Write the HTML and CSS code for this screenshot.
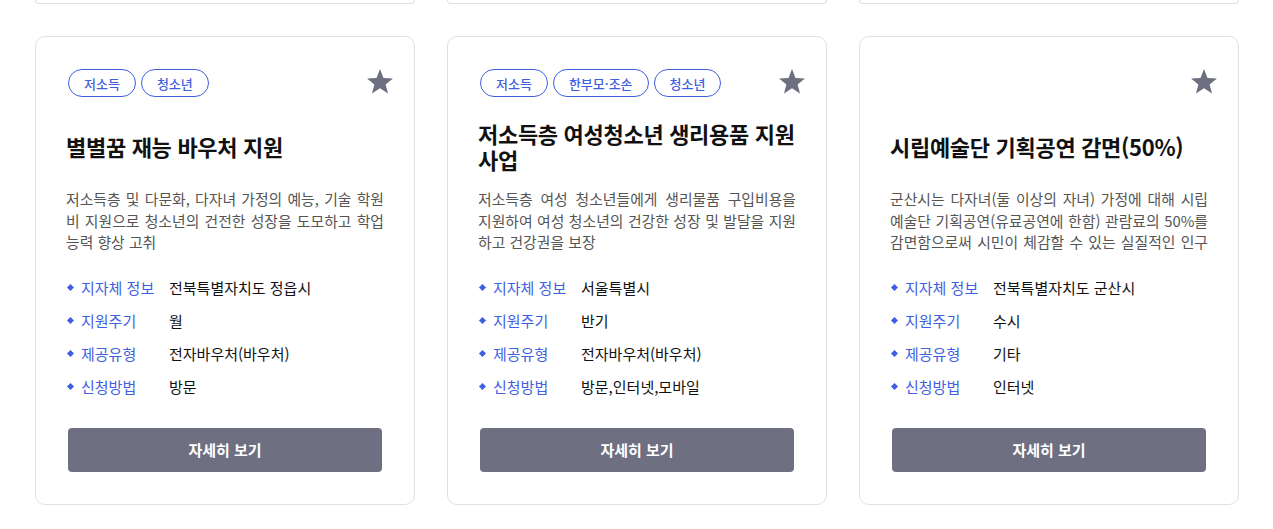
FILE: index.html
```html
<!DOCTYPE html>
<html lang="ko">
<head>
<meta charset="utf-8">
<title>지원 사업 목록</title>
<link rel="stylesheet" href="styles.css">
</head>
<body>
<div class="page">
  <div class="grid">
    <div class="stub"></div>
    <div class="stub"></div>
    <div class="stub"></div>

    <article class="card">
      <div class="card-top">
        <div class="tags">
          <span class="tag">저소득</span>
          <span class="tag">청소년</span>
        </div>
        <svg class="star" viewBox="0 0 24 24" aria-hidden="true"><path d="M12 1.8l3 7.6 8.1.4-6.3 5.1 2.1 7.9L12 18.3l-6.9 4.5 2.1-7.9L.9 9.8l8.1-.4z"/></svg>
      </div>
      <div class="title-box"><h2 class="title">별별꿈 재능 바우처 지원</h2></div>
      <p class="desc">저소득층 및 다문화, 다자녀 가정의 예능, 기술 학원비 지원으로 청소년의 건전한 성장을 도모하고 학업 능력 향상 고취</p>
      <ul class="info">
        <li><span class="label">지자체 정보</span><span class="value">전북특별자치도 정읍시</span></li>
        <li><span class="label">지원주기</span><span class="value">월</span></li>
        <li><span class="label">제공유형</span><span class="value">전자바우처(바우처)</span></li>
        <li><span class="label">신청방법</span><span class="value">방문</span></li>
      </ul>
      <button class="btn" type="button">자세히 보기</button>
    </article>

    <article class="card">
      <div class="card-top">
        <div class="tags">
          <span class="tag">저소득</span>
          <span class="tag">한부모·조손</span>
          <span class="tag">청소년</span>
        </div>
        <svg class="star" viewBox="0 0 24 24" aria-hidden="true"><path d="M12 1.8l3 7.6 8.1.4-6.3 5.1 2.1 7.9L12 18.3l-6.9 4.5 2.1-7.9L.9 9.8l8.1-.4z"/></svg>
      </div>
      <div class="title-box"><h2 class="title">저소득층 여성청소년 생리용품 지원사업</h2></div>
      <p class="desc">저소득층 여성 청소년들에게 생리물품 구입비용을 지원하여 여성 청소년의 건강한 성장 및 발달을 지원하고 건강권을 보장</p>
      <ul class="info">
        <li><span class="label">지자체 정보</span><span class="value">서울특별시</span></li>
        <li><span class="label">지원주기</span><span class="value">반기</span></li>
        <li><span class="label">제공유형</span><span class="value">전자바우처(바우처)</span></li>
        <li><span class="label">신청방법</span><span class="value">방문,인터넷,모바일</span></li>
      </ul>
      <button class="btn" type="button">자세히 보기</button>
    </article>

    <article class="card">
      <div class="card-top">
        <div class="tags"></div>
        <svg class="star" viewBox="0 0 24 24" aria-hidden="true"><path d="M12 1.8l3 7.6 8.1.4-6.3 5.1 2.1 7.9L12 18.3l-6.9 4.5 2.1-7.9L.9 9.8l8.1-.4z"/></svg>
      </div>
      <div class="title-box"><h2 class="title">시립예술단 기획공연 감면(50%)</h2></div>
      <p class="desc">군산시는 다자녀(둘 이상의 자녀) 가정에 대해 시립예술단 기획공연(유료공연에 한함) 관람료의 50%를 감면함으로써 시민이 체감할 수 있는 실질적인 인구 정책을 추진하고자 함</p>
      <ul class="info">
        <li><span class="label">지자체 정보</span><span class="value">전북특별자치도 군산시</span></li>
        <li><span class="label">지원주기</span><span class="value">수시</span></li>
        <li><span class="label">제공유형</span><span class="value">기타</span></li>
        <li><span class="label">신청방법</span><span class="value">인터넷</span></li>
      </ul>
      <button class="btn" type="button">자세히 보기</button>
    </article>
  </div>
</div>
</body>
</html>
```
FILE: styles.css
```css
* { box-sizing: border-box; }
html, body { margin: 0; padding: 0; background: #fff; }
body {
  font-family: "Noto Sans CJK KR", "Noto Sans", sans-serif;
  color: #111;
}
.page {
  padding: 0 34px 0 35px;
}
.grid {
  display: grid;
  grid-template-columns: repeat(3, 380px);
  column-gap: 32px;
  row-gap: 32px;
}
.stub {
  height: 4px;
  border: 1px solid #e0e0e0;
  border-top: none;
  border-radius: 0 0 10px 10px;
}
.card {
  border: 1px solid #e0e0e0;
  border-radius: 10px;
  padding: 32px;
  display: flex;
  flex-direction: column;
  background: #fff;
}
.card-top {
  display: flex;
  justify-content: space-between;
  align-items: flex-start;
  height: 28px;
}
.tags {
  display: flex;
  gap: 5px;
}
.tag {
  display: inline-flex;
  align-items: center;
  height: 28px;
  padding: 0 15px;
  border: 1px solid #3f5fe0;
  border-radius: 14px;
  color: #3f5fe0;
  font-size: 13px;
  font-weight: 500;
  line-height: 1;
}
.star {
  width: 28px;
  height: 28px;
  margin-top: -2px;
  margin-right: -12px;
  fill: #6e7082;
}
.title-box {
  margin: 23px -2px 0;
  height: 52px;
  display: flex;
  align-items: center;
}
.title {
  margin: 0;
  font-size: 22px;
  line-height: 26px;
  font-weight: 700;
  color: #111;
  letter-spacing: -0.3px;
}
.desc {
  margin: 16px -2px 0;
  font-size: 14.85px;
  line-height: 21.5px;
  color: #555;
  text-align: justify;
  height: 64.5px;
  overflow: hidden;
}
.info {
  list-style: none;
  margin: 24px -2px 0;
  padding: 0;
  display: flex;
  flex-direction: column;
  gap: 11px;
}
.info li {
  display: flex;
  align-items: center;
  height: 22px;
  font-size: 15px;
}
.label {
  position: relative;
  width: 103px;
  padding-left: 15px;
  color: #3f5fe0;
}
.label::before {
  content: "";
  position: absolute;
  left: 2px;
  top: 50%;
  width: 5px;
  height: 5px;
  margin-top: -3px;
  background: #3f5fe0;
  transform: rotate(45deg);
}
.value {
  color: #111;
}
.btn {
  margin-top: 30px;
  height: 44px;
  width: 100%;
  border: none;
  border-radius: 4px;
  background: #6e7082;
  color: #fff;
  font-family: inherit;
  font-size: 15px;
  font-weight: 700;
  cursor: pointer;
}
```
